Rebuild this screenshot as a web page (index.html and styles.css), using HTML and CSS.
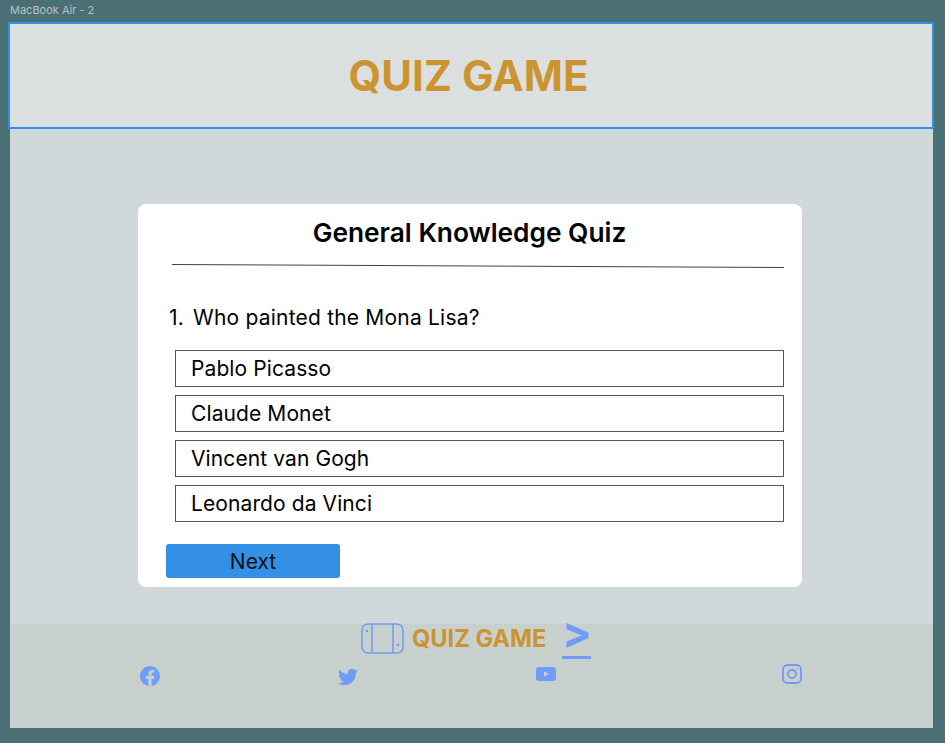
FILE: index.html
```html
<!DOCTYPE html>
<html lang="en">
<head>
    <meta charset="UTF-8">
    <meta name="viewport" content="width=device-width, initial-scale=1.0">
    <title>Quiz Game</title>
    <link rel="stylesheet" href="styles.css">
</head>
<body>
    <div class="frame-label">MacBook Air - 2</div>
    <div class="frame">
        <header class="header">
            <h1>QUIZ GAME</h1>
        </header>

        <main class="main">
            <section class="card">
                <h2>General Knowledge Quiz</h2>
                <svg class="divider" width="612" height="4" viewBox="0 0 612 4">
                    <line x1="0" y1="0.5" x2="612" y2="3.5" stroke="#444" stroke-width="1"></line>
                </svg>
                <p class="question"><span class="question-num">1.</span> Who painted the Mona Lisa?</p>
                <div class="options">
                    <div class="option">Pablo Picasso</div>
                    <div class="option">Claude Monet</div>
                    <div class="option">Vincent van Gogh</div>
                    <div class="option">Leonardo da Vinci</div>
                </div>
                <button class="next">Next</button>
            </section>
        </main>

        <footer class="footer">
            <div class="brand">
                <svg class="brand-icon" width="44" height="31" viewBox="0 0 44 31" fill="none" stroke="#6f9cf5" stroke-width="1.5">
                    <rect x="1" y="1" width="41" height="29" rx="6"></rect>
                    <line x1="11" y1="1" x2="11" y2="30"></line>
                    <line x1="32" y1="1" x2="32" y2="30"></line>
                    <circle cx="6" cy="8" r="0.6"></circle>
                    <circle cx="37" cy="22" r="0.6"></circle>
                </svg>
                <span class="brand-name">QUIZ GAME</span>
                <div class="brand-mark">
                    <span class="brand-arrow">&gt;</span>
                </div>
            </div>
            <div class="socials">
                <svg class="social social-fb" width="20" height="20" viewBox="0 0 24 24" fill="#6f9cf5">
                    <path d="M24 12.07C24 5.4 18.63 0 12 0S0 5.400 0 12.070c0 6.030 4.390 11.020 10.130 11.930v-8.440H7.080v-3.490h3.050V9.410c0-3.020 1.790-4.700 4.530-4.700 1.310 0 2.690.24 2.690.24v2.970h-1.510c-1.490 0-1.960.93-1.960 1.890v2.260h3.330l-.53 3.490h-2.800V24C19.610 23.090 24 18.100 24 12.070z"></path>
                </svg>
                <svg class="social social-tw" width="20" height="20" viewBox="0 0 24 24" fill="#6f9cf5">
                    <path d="M23.950 4.570a10 10 0 0 1-2.820.77 4.960 4.960 0 0 0 2.160-2.720c-.95.550-2 .96-3.130 1.190a4.920 4.920 0 0 0-8.380 4.480C7.690 8.090 4.070 6.130 1.640 3.160a4.820 4.820 0 0 0-.67 2.480c0 1.710.87 3.210 2.190 4.090a4.900 4.900 0 0 1-2.230-.61v.06a4.920 4.920 0 0 0 3.950 4.830 4.990 4.990 0 0 1-2.210.08 4.940 4.940 0 0 0 4.600 3.420A9.870 9.870 0 0 1 0 19.540a14 14 0 0 0 7.560 2.210c9.050 0 14-7.500 14-13.980 0-.21 0-.42-.02-.63a9.940 9.940 0 0 0 2.410-2.570z"></path>
                </svg>
                <svg class="social social-yt" width="20" height="20" viewBox="0 0 20 20">
                    <rect x="0" y="3" width="20" height="14" rx="3" fill="#6f9cf5"></rect>
                    <path d="M8 7.500 L13 10 L8 12.500 Z" fill="#c8d0ce"></path>
                </svg>
                <svg class="social social-ig" width="20" height="20" viewBox="0 0 20 20" fill="none" stroke="#6f9cf5" stroke-width="1.800">
                    <rect x="1" y="1" width="18" height="18" rx="4.500"></rect>
                    <circle cx="10" cy="10" r="4"></circle>
                    <circle cx="15" cy="5" r="0.8" fill="#6f9cf5" stroke="none"></circle>
                </svg>
            </div>
        </footer>
    </div>
</body>
</html>
```

FILE: styles.css
```css
html, body {
    margin: 0;
    padding: 0;
}

body {
    width: 945px;
    height: 743px;
    overflow: hidden;
    background-color: #4a6f75;
    font-family: Inter, 'Liberation Sans', sans-serif;
    color: #000;
    padding: 3px 0 0 10px;
    box-sizing: border-box;
}

.frame-label {
    height: 19px;
    font-size: 11px;
    line-height: 14px;
    color: #b4c3c6;
}

.frame {
    width: 923px;
    height: 706px;
    display: flex;
    flex-direction: column;
    background-color: #d0d8d9;
}

.header {
    width: 926px;
    height: 107px;
    margin-left: -2px;
    padding-right: 5px;
    box-sizing: border-box;
    border: 2px solid #3490e4;
    background-color: #dbdfe0;
    display: flex;
    justify-content: center;
    align-items: center;
}

.header h1 {
    margin: 0;
    font-size: 42px;
    font-weight: 700;
    letter-spacing: 0.1px;
    color: #cc9431;
}

.main {
    height: 495px;
    padding: 75px 0 0 128px;
    box-sizing: border-box;
}

.card {
    width: 664px;
    height: 383px;
    box-sizing: border-box;
    background-color: #fff;
    border-radius: 8px;
    padding: 12px 18px 0 28px;
}

.card h2 {
    margin: 0;
    font-size: 26.3px;
    line-height: 33px;
    font-weight: 600;
    text-align: center;
    padding-right: 11px;
}

.divider {
    display: block;
    margin: 15px 0 0 6px;
}

.question {
    margin: 37px 0 0 3px;
    font-size: 21px;
    line-height: 26px;
    letter-spacing: 0.2px;
}

.question-num {
    margin-right: 3px;
}

.options {
    display: flex;
    flex-direction: column;
    gap: 8px;
    margin: 19px 0 0 9px;
}

.option {
    height: 37px;
    box-sizing: border-box;
    border: 1px solid #555;
    padding-left: 15px;
    font-size: 21px;
    line-height: 36px;
    letter-spacing: 0.1px;
}

.next {
    display: block;
    width: 174px;
    height: 34px;
    margin-top: 22px;
    border: none;
    border-radius: 3px;
    background-color: #3490e4;
    color: #111;
    font-family: inherit;
    font-size: 21px;
    padding: 0;
}

.footer {
    height: 104px;
    background-color: #c8d0ce;
}

.brand {
    display: flex;
    align-items: flex-start;
    height: 34px;
    padding-left: 351px;
}

.brand-icon {
    margin-top: -1px;
}

.brand-name {
    margin: 1px 16px 0 7px;
    font-size: 23.6px;
    line-height: 28px;
    font-weight: 700;
    color: #cc9431;
}

.brand-mark {
    width: 29px;
    height: 32px;
    border-bottom: 3px solid #6f9cf5;
    display: flex;
    justify-content: center;
}

.brand-arrow {
    font-size: 44px;
    line-height: 17px;
    font-weight: 700;
    color: #6f9cf5;
}

.socials {
    display: flex;
    align-items: flex-start;
    padding: 3px 0 0 130px;
}

.social-fb { margin: 5px 178px 0 0; }
.social-tw { margin: 6px 178px 0 0; }
.social-yt { margin: 3px 226px 0 0; }
.social-ig { margin: 3px 0 0 0; }
```
